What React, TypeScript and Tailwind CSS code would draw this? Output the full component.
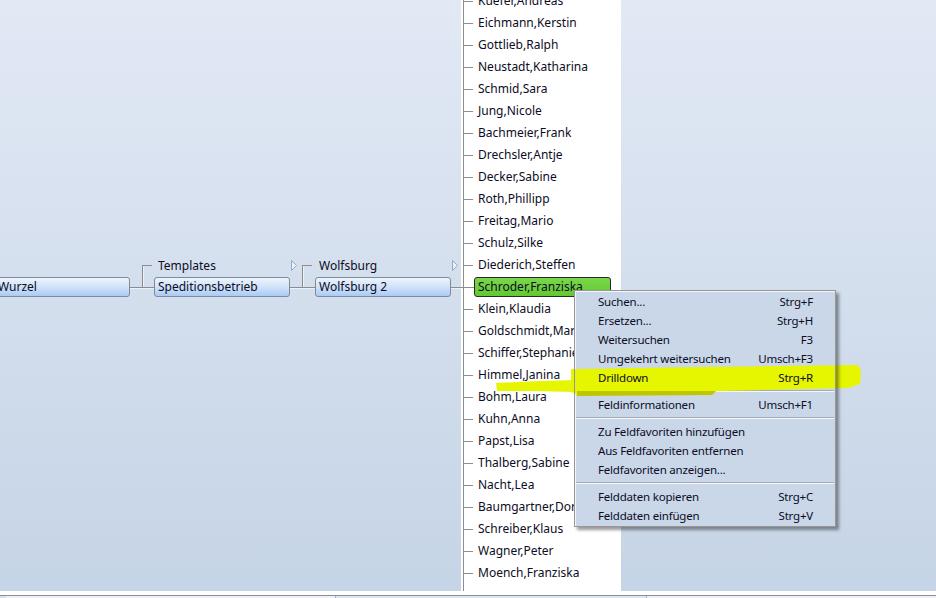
import React from "react";

const PEOPLE = [
  "Kuefer,Andreas",
  "Eichmann,Kerstin",
  "Gottlieb,Ralph",
  "Neustadt,Katharina",
  "Schmid,Sara",
  "Jung,Nicole",
  "Bachmeier,Frank",
  "Drechsler,Antje",
  "Decker,Sabine",
  "Roth,Phillipp",
  "Freitag,Mario",
  "Schulz,Silke",
  "Diederich,Steffen",
  "Schroder,Franziska",
  "Klein,Klaudia",
  "Goldschmidt,Marion",
  "Schiffer,Stephanie",
  "Himmel,Janina",
  "Bohm,Laura",
  "Kuhn,Anna",
  "Papst,Lisa",
  "Thalberg,Sabine",
  "Nacht,Lea",
  "Baumgartner,Doris",
  "Schreiber,Klaus",
  "Wagner,Peter",
  "Moench,Franziska",
];

const SELECTED = "Schroder,Franziska";

type MenuEntry = { label: string; key?: string } | "sep";

const MENU: MenuEntry[] = [
  { label: "Suchen...", key: "Strg+F" },
  { label: "Ersetzen...", key: "Strg+H" },
  { label: "Weitersuchen", key: "F3" },
  { label: "Umgekehrt weitersuchen", key: "Umsch+F3" },
  { label: "Drilldown", key: "Strg+R" },
  "sep",
  { label: "Feldinformationen", key: "Umsch+F1" },
  "sep",
  { label: "Zu Feldfavoriten hinzufügen" },
  { label: "Aus Feldfavoriten entfernen" },
  { label: "Feldfavoriten anzeigen..." },
  "sep",
  { label: "Felddaten kopieren", key: "Strg+C" },
  { label: "Felddaten einfügen", key: "Strg+V" },
];

/** Highlighter stroke, in page coordinates (shared by both layers). */
function Highlight() {
  return (
    <>
      <path
        d="M571 369 L700 367 L858 365 L861 371 L860 384 L848 388 L720 391 L600 394 L578 395 L571 392 Z"
        fill="#e6f500"
      />
      <path d="M496 383 L540 381 L576 380 L576 392 L530 391 L497 391 Z" fill="#e6f500" />
      <path d="M577 391 L716 391 L712 395 L577 396 Z" fill="#bfc600" />
    </>
  );
}

const boxBlue =
  "h-[20px] rounded-[3px] border border-[#7d8a9c] bg-linear-to-b from-[#eef4fd] via-[#d0e2f9] to-[#a9cbf5] pl-[3px] leading-[18px] whitespace-nowrap overflow-hidden";

function TreeNode({ label, box, className = "" }: { label?: string; box: string; className?: string }) {
  return (
    <div className={`flex w-[136px] shrink-0 flex-col ${className}`}>
      <div className="h-[19px] pl-[4px] leading-[19px]">{label}</div>
      <div className={`mt-[2px] ${boxBlue}`}>{box}</div>
    </div>
  );
}

/** Elbow connector between two tree levels, with optional collapse arrow. */
function Connector({ width, elbow, arrow }: { width: number; elbow?: number; arrow?: boolean }) {
  return (
    <svg width={width} height={41} className="shrink-0" shapeRendering="crispEdges">
      <line x1={0} y1={31.5} x2={width} y2={31.5} stroke="#8c8c8c" />
      <line x1={0} y1={32.5} x2={width} y2={32.5} stroke="#ffffff" strokeOpacity={0.6} />
      {elbow !== undefined && (
        <>
          <line x1={elbow + 0.5} y1={9} x2={elbow + 0.5} y2={31} stroke="#8c8c8c" />
          <line x1={elbow + 1.5} y1={10} x2={elbow + 1.5} y2={31} stroke="#ffffff" strokeOpacity={0.6} />
          <line x1={elbow} y1={9.5} x2={elbow + 10} y2={9.5} stroke="#8c8c8c" />
        </>
      )}
      {arrow && (
        <path
          d="M1.5 4.5 L6.5 9.5 L1.5 14.5 Z"
          fill="#eef3fb"
          stroke="#96a8c8"
          shapeRendering="geometricPrecision"
        />
      )}
    </svg>
  );
}

function ContextMenu() {
  return (
    <div className="absolute left-[574px] top-[290px] h-[237px] w-[262px] border border-[#979797] bg-[#c9d7e9] py-[1px] text-[11.5px] tracking-[-0.2px] shadow-[inset_1px_1px_0_#f2f6fb,3px_3px_3px_rgba(0,0,0,0.4)]">
      <svg
        className="absolute inset-0"
        width={260}
        height={235}
        viewBox="575 291 260 235"
      >
        <Highlight />
      </svg>
      {MENU.map((m, i) =>
        m === "sep" ? (
          <div key={i} className="mx-[1px] h-[8px] pt-[3px]">
            <div className="h-px bg-[#a4aab4]" />
            <div className="h-px bg-[#f4f7fb]" />
          </div>
        ) : (
          <div
            key={i}
            className="relative flex h-[19px] items-center justify-between pl-[23px] pr-[22px] leading-[19px]"
          >
            <span>{m.label}</span>
            {m.key && <span>{m.key}</span>}
          </div>
        )
      )}
    </div>
  );
}

export default function App() {
  return (
    <div className="relative flex h-[598px] w-[936px] flex-col overflow-hidden bg-white font-['Segoe_UI','Noto_Sans',sans-serif] text-[12px] text-[#0c0c24]">
      {/* highlighter stroke drawn over the backgrounds, under the texts */}
      <svg className="pointer-events-none absolute left-0 top-0" width={936} height={598}>
        <Highlight />
      </svg>

      <div className="flex h-[591px] shrink-0 bg-linear-to-b from-[#e2e9f5] to-[#c5d4e6]">
        {/* tree path */}
        <div className="flex w-[461px] shrink-0 items-start pt-[256px]">
          <TreeNode box="Wurzel" className="-ml-[6px]" />
          <Connector width={24} elbow={12} />
          <TreeNode label="Templates" box="Speditionsbetrieb" />
          <Connector width={25} elbow={12} arrow />
          <TreeNode label="Wolfsburg" box="Wolfsburg 2" className="w-[135px]" />
          <Connector width={11} arrow />
        </div>

        {/* children list */}
        <div className="h-full w-[160px] shrink-0 overflow-hidden bg-white">
          <div className="-mt-[10px] ml-[2px] h-[620px] border-l border-[#8d8d8d]">
            {PEOPLE.map((name) =>
              name === SELECTED ? (
                <div key={name} className="flex h-[22px] items-center">
                  <div className="-ml-[4px] h-px w-[14px] bg-[#8c8c8c]" />
                  <div className="relative h-[20px] w-[137px] rounded-[3px] border border-[#2a2a2a] bg-linear-to-b from-[#7ad64a] to-[#62c92f] pl-[3px] leading-[18px] whitespace-nowrap">
                    {name}
                  </div>
                </div>
              ) : (
                <div key={name} className="flex h-[22px] items-center">
                  <div className="h-px w-[9px] bg-[#8d8d8d]" />
                  <span className="relative ml-[5px] whitespace-nowrap">{name}</span>
                </div>
              )
            )}
            <div className="flex h-[22px] items-center">
              <div className="h-px w-[9px] bg-[#8d8d8d]" />
            </div>
          </div>
        </div>

        <div className="flex-1" />
      </div>

      {/* bottom edge and horizontal scrollbar */}
      <div className="h-[4px] shrink-0 bg-white" />
      <div className="h-px shrink-0 bg-[#8e8e8e]" />
      <div className="flex h-[2px] shrink-0 bg-[#eef2f8]">
        <div className="w-[6px] bg-[#d6e2f2]" />
        <div className="ml-[329px] w-[312px] border-x border-[#9fb6d6] bg-[#dde8f7]" />
      </div>

      <ContextMenu />
    </div>
  );
}
